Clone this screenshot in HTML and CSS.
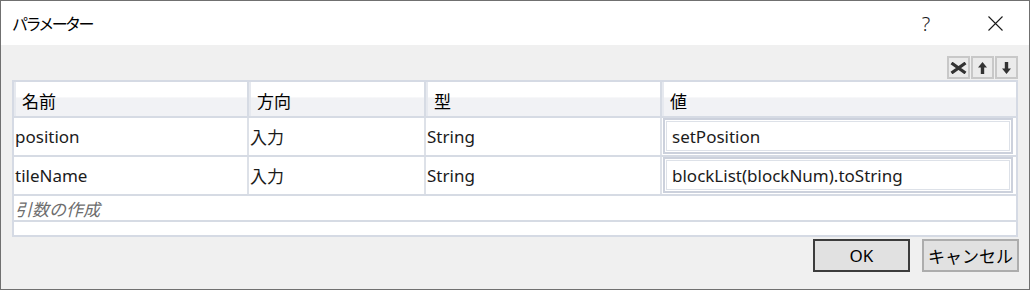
FILE: index.html
```html
<!DOCTYPE html>
<html lang="ja">
<head>
<meta charset="utf-8">
<title>パラメーター</title>
<link rel="stylesheet" href="styles.css">
</head>
<body>
<div class="window">
  <div class="titlebar">
    <span class="title">パラメーター</span>
    <span class="help">?</span>
    <span class="close">
      <svg width="15" height="15" viewBox="0 0 15 15"><path d="M0.5 0.5 L14.5 14.5 M14.5 0.5 L0.5 14.5" stroke="#1a1a1a" stroke-width="1.1" fill="none"/></svg>
    </span>
  </div>
  <div class="content">
    <div class="toolbar">
      <button class="tb" title="削除">
        <svg width="17" height="12" viewBox="0 0 17 12"><path d="M1.5 1 L15.5 11 M15.5 1 L1.5 11" stroke="#333" stroke-width="3.2" fill="none" stroke-linecap="butt"/></svg>
      </button>
      <button class="tb" title="上へ">
        <svg width="9" height="12" viewBox="0 0 9 12"><path d="M4.5 0 L9 5.5 L6.2 5.5 L6.2 12 L2.8 12 L2.8 5.5 L0 5.5 Z" fill="#333"/></svg>
      </button>
      <button class="tb" title="下へ">
        <svg width="9" height="12" viewBox="0 0 9 12"><path d="M4.5 12 L9 6.5 L6.2 6.5 L6.2 0 L2.8 0 L2.8 6.5 L0 6.5 Z" fill="#333"/></svg>
      </button>
    </div>
    <div class="grid">
      <div class="row header">
        <div class="cell">名前</div>
        <div class="cell">方向</div>
        <div class="cell">型</div>
        <div class="cell">値</div>
      </div>
      <div class="row body">
        <div class="cell">position</div>
        <div class="cell">入力</div>
        <div class="cell">String</div>
        <div class="cell value"><div class="textbox">setPosition</div></div>
      </div>
      <div class="row body">
        <div class="cell">tileName</div>
        <div class="cell">入力</div>
        <div class="cell">String</div>
        <div class="cell value"><div class="textbox">blockList(blockNum).toString</div></div>
      </div>
      <div class="row add">引数の作成</div>
      <div class="row empty"></div>
    </div>
    <div class="actions">
      <button class="btn default">OK</button>
      <button class="btn">キャンセル</button>
    </div>
  </div>
</div>
</body>
</html>
```
FILE: styles.css
```css
* { box-sizing: border-box; }
html, body { margin: 0; padding: 0; background: #f0f0f0; }
body {
  font-family: "Noto Sans", "Noto Sans CJK JP", sans-serif;
  font-size: 17px;
  color: #1b1b1b;
}
.window {
  width: 1030px;
  height: 290px;
  border: 1px solid #707070;
  background: #f0f0f0;
  display: flex;
  flex-direction: column;
}
.titlebar {
  height: 44px;
  background: #ffffff;
  display: flex;
  align-items: center;
  padding-left: 11px;
  flex-shrink: 0;
}
.title {
  font-size: 16px;
  letter-spacing: -2.6px;
  color: #000;
  flex: 1;
}
.help {
  font-size: 20px;
  font-weight: 300;
  color: #1a1a1a;
  width: 14px;
  text-align: center;
  margin-right: 55px;
}
.close {
  display: flex;
  width: 15px;
  height: 15px;
  margin-right: 26px;
}
.content {
  flex: 1;
  padding: 11px 10px 0 11px;
  display: flex;
  flex-direction: column;
}
.toolbar {
  display: flex;
  justify-content: flex-end;
  gap: 1px;
  height: 24px;
  padding-right: 1px;
}
.tb {
  width: 23px;
  height: 23px;
  padding: 0;
  margin: 0;
  border: 2px solid #c8c8c8;
  background: #ebebeb;
  display: flex;
  align-items: center;
  justify-content: center;
}
.grid {
  width: 1006px;
  background: #ffffff;
  border: 2px solid #d5dae4;
  display: flex;
  flex-direction: column;
}
.row {
  border-bottom: 2px solid #d6dbe4;
}
.row.header, .row.body {
  display: grid;
  grid-template-columns: 235px 177px 236px 1fr;
}
.row.header { height: 36px; }
.row.body { height: 39px; }
.row.header .cell {
  background: linear-gradient(#ffffff 0%, #ffffff 45%, #f1f2f5 46%, #f1f2f5 100%);
  border-right: 2px solid #d6dbe4;
  border-left: 2px solid #e6e9ef;
  padding-left: 6px;
  padding-top: 2px;
  display: flex;
  align-items: center;
  color: #000;
}
.row.header .cell:last-child { border-right: none; }
.row.body .cell {
  border-right: 2px solid #dde1e8;
  padding-left: 1px;
  display: flex;
  align-items: center;
}
.row.body .cell:last-child { border-right: none; }
.row.body .cell.value {
  padding: 0 3px 0 1px;
  align-items: flex-start;
}
.textbox {
  width: 100%;
  height: 36px;
  border: 2px solid #ccd1dc;
  box-shadow: inset 0 0 0 1px #ffffff, inset 0 0 0 2px #dde1e8;
  padding-left: 7px;
  display: flex;
  align-items: center;
  background: #fff;
}
.row.add {
  height: 26px;
  padding-left: 1px;
  font-style: italic;
  color: #6d6d6d;
  display: flex;
  align-items: center;
}
.row.empty {
  height: 13px;
  border-bottom: none;
}
.actions {
  display: flex;
  justify-content: flex-end;
  gap: 12px;
  margin-top: 2px;
}
.btn {
  width: 97px;
  height: 33px;
  font-family: "Noto Sans", "Noto Sans CJK JP", sans-serif;
  font-size: 17px;
  color: #000;
  background: #e1e1e1;
  border: 2px solid #adadad;
  padding: 0;
  margin: 0;
}
.btn.default {
  border-color: #3c3c3c;
}
```
